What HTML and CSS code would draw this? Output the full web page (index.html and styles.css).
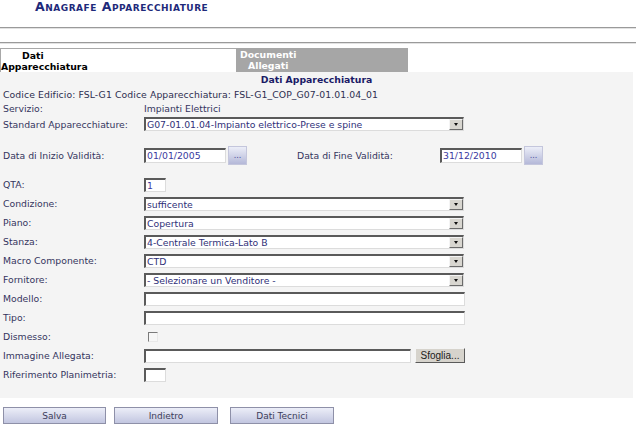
FILE: index.html
```html
<!DOCTYPE html>
<html lang="it">
<head>
<meta charset="utf-8">
<title>Anagrafe Apparecchiature</title>
<link rel="stylesheet" href="styles.css">
</head>
<body>
<div class="page">
  <h1 class="title">Anagrafe Apparecchiature</h1>
  <div class="rule rule-a"></div>
  <div class="rule rule-b"></div>

  <div class="tabs">
    <div class="tab tab-active"><span class="indent-a">Dati</span><br>Apparecchiatura</div>
    <div class="tab tab-other"><span class="indent-b">Documenti</span><br><span class="indent-c">Allegati</span></div>
  </div>

  <div class="panel">
    <div class="panel-title">Dati Apparecchiatura</div>
    <div class="info">Codice Edificio: FSL-G1 Codice Apparecchiatura: FSL-G1_COP_G07-01.01.04_01</div>

    <div class="row row-text">
      <span class="label">Servizio:</span>
      <span class="value">Impianti Elettrici</span>
    </div>

    <div class="row row-std">
      <span class="label">Standard Apparecchiature:</span>
      <div class="select"><span class="sel-text">G07-01.01.04-Impianto elettrico-Prese e spine</span><span class="arrow"></span></div>
    </div>

    <div class="row row-date">
      <span class="label">Data di Inizio Validità:</span>
      <div class="date-group">
        <div class="input input-date">01/01/2005</div>
        <button class="btn-cal" type="button">...</button>
        <span class="label label-end">Data di Fine Validità:</span>
        <div class="input input-date">31/12/2010</div>
        <button class="btn-cal" type="button">...</button>
      </div>
    </div>

    <div class="row row-qta">
      <span class="label">QTA:</span>
      <div class="input input-small">1</div>
    </div>

    <div class="row">
      <span class="label">Condizione:</span>
      <div class="select"><span class="sel-text">sufficente</span><span class="arrow"></span></div>
    </div>
    <div class="row">
      <span class="label">Piano:</span>
      <div class="select"><span class="sel-text">Copertura</span><span class="arrow"></span></div>
    </div>
    <div class="row">
      <span class="label">Stanza:</span>
      <div class="select"><span class="sel-text">4-Centrale Termica-Lato B</span><span class="arrow"></span></div>
    </div>
    <div class="row">
      <span class="label">Macro Componente:</span>
      <div class="select"><span class="sel-text">CTD</span><span class="arrow"></span></div>
    </div>
    <div class="row">
      <span class="label">Fornitore:</span>
      <div class="select"><span class="sel-text">- Selezionare un Venditore -</span><span class="arrow"></span></div>
    </div>
    <div class="row">
      <span class="label">Modello:</span>
      <div class="input input-wide"></div>
    </div>
    <div class="row">
      <span class="label">Tipo:</span>
      <div class="input input-wide"></div>
    </div>
    <div class="row">
      <span class="label">Dismesso:</span>
      <span class="checkbox"></span>
    </div>
    <div class="row">
      <span class="label">Immagine Allegata:</span>
      <div class="file-group">
        <div class="input input-file"></div>
        <button class="btn-browse" type="button">Sfoglia...</button>
      </div>
    </div>
    <div class="row">
      <span class="label">Riferimento Planimetria:</span>
      <div class="input input-small"></div>
    </div>
  </div>

  <div class="actions">
    <button class="btn" type="button">Salva</button>
    <button class="btn btn-2" type="button">Indietro</button>
    <button class="btn btn-3" type="button">Dati Tecnici</button>
  </div>
</div>
</body>
</html>
```

FILE: styles.css
```css
html, body {
  margin: 0;
  padding: 0;
  background: #ffffff;
}

body {
  font-family: "DejaVu Sans", Verdana, sans-serif;
  font-size: 9.3px;
  color: #34345e;
  width: 642px;
  height: 433px;
  overflow: hidden;
}

.page {
  width: 642px;
}

.title {
  margin: 0;
  padding: 0 0 0 35px;
  height: 14px;
  font-size: 12.6px;
  line-height: 13px;
  font-weight: bold;
  font-variant: small-caps;
  letter-spacing: 0.5px;
  color: #1e2a7a;
}

.rule {
  width: 636px;
  height: 1px;
  background: #9a9a9a;
  border-bottom: 1px solid #e2e2e2;
}

.rule-a {
  margin-top: 13px;
}

.rule-b {
  margin-top: 13px;
}

.tabs {
  display: flex;
  margin-top: 4px;
  height: 24px;
}

.tab {
  box-sizing: border-box;
  height: 24px;
  font-weight: bold;
  font-size: 9.3px;
  line-height: 11px;
  padding-top: 1px;
}

.tab-active {
  width: 236px;
  background: #ffffff;
  border-top: 1px solid #a8a8a8;
  border-left: 1px solid #a8a8a8;
  color: #000000;
  padding-left: 0;
}

.indent-a {
  margin-left: 21px;
}

.tab-other {
  width: 172px;
  background: #a6a6a6;
  color: #ffffff;
  padding-left: 4px;
}

.indent-c {
  margin-left: 8px;
}

.panel {
  box-sizing: border-box;
  width: 633px;
  height: 326px;
  background: #f4f4f4;
}

.panel-title {
  height: 16px;
  line-height: 16px;
  text-align: center;
  font-weight: bold;
  color: #1a1a66;
}

.info {
  height: 14px;
  line-height: 14px;
  padding-left: 3px;
  color: #2e2e50;
  letter-spacing: 0.08px;
}

.row {
  display: grid;
  grid-template-columns: 141px auto;
  align-items: center;
  height: 19px;
  padding-left: 3px;
  justify-items: start;
}

.row-text {
  height: 12px;
}

.row-std {
  height: 20px;
}

.row-date {
  height: 20px;
  margin-top: 11px;
}

.row-qta {
  margin-top: 10px;
}

.value {
  color: #34345e;
}

.select {
  box-sizing: border-box;
  display: flex;
  align-items: center;
  width: 320px;
  height: 14px;
  background: #ffffff;
  border-style: solid;
  border-width: 2px 1px 1px 2px;
  border-color: #5a5a5a #dcdcdc #dcdcdc #5a5a5a;
}

.sel-text {
  flex: 1;
  padding-left: 1px;
  color: #2f2f78;
  line-height: 11px;
  white-space: nowrap;
  overflow: hidden;
}

.arrow {
  box-sizing: border-box;
  position: relative;
  width: 14px;
  height: 11px;
  background: #d8d6d0;
  border-style: solid;
  border-width: 1px;
  border-color: #f4f4f4 #6a6a6a #6a6a6a #f4f4f4;
}

.arrow::after {
  content: "";
  position: absolute;
  left: 4px;
  top: 3px;
  border-left: 2px solid transparent;
  border-right: 2px solid transparent;
  border-top: 3px solid #111111;
}

.input {
  box-sizing: border-box;
  height: 14px;
  background: #ffffff;
  border-style: solid;
  border-width: 2px 1px 1px 2px;
  border-color: #5a5a5a #dcdcdc #dcdcdc #5a5a5a;
  color: #3a3aa0;
  line-height: 11px;
  padding-left: 1px;
  white-space: nowrap;
}

.input-wide {
  width: 321px;
}

.input-small {
  width: 22px;
}

.input-file {
  width: 267px;
}

.date-group,
.file-group {
  display: flex;
  align-items: center;
}

.input-date {
  width: 82px;
  height: 15px;
}

.btn-cal {
  box-sizing: border-box;
  width: 19px;
  height: 19px;
  margin: 0 0 0 2px;
  padding: 0 0 3px 0;
  border: 1px solid #c4c6dc;
  background: linear-gradient(#eceef8, #b4b8d8);
  color: #4a4a9a;
  font-family: "DejaVu Sans", sans-serif;
  font-size: 8px;
  line-height: 10px;
  display: flex;
  align-items: flex-end;
  justify-content: center;
}

.label-end {
  margin-left: 50px;
  width: 143px;
}

.checkbox {
  box-sizing: border-box;
  display: block;
  width: 10px;
  height: 10px;
  margin-left: 4px;
  background: #f6f6f6;
  border-style: solid;
  border-width: 1px;
  border-color: #7a7a7a #e8e8e8 #e8e8e8 #7a7a7a;
}

.btn-browse {
  box-sizing: border-box;
  width: 50px;
  height: 15px;
  margin: 0 0 0 4px;
  padding: 0;
  background: #d6d3cc;
  border-style: solid;
  border-width: 1px;
  border-color: #f4f4f4 #5a5a5a #5a5a5a #f4f4f4;
  font-family: "Liberation Sans", Arial, sans-serif;
  font-size: 10px;
  line-height: 12px;
  color: #202020;
}

.actions {
  display: flex;
  padding: 9px 0 0 3px;
}

.btn {
  box-sizing: border-box;
  width: 103px;
  height: 17px;
  margin: 0;
  padding: 0;
  border: 1px solid #8e90a8;
  background: linear-gradient(#eceef8, #c2c6e0);
  font-family: "DejaVu Sans", sans-serif;
  font-size: 9px;
  line-height: 14px;
  color: #3c3c5a;
}

.btn-2 {
  margin-left: 8px;
  width: 104px;
}

.btn-3 {
  margin-left: 12px;
  width: 104px;
}
```
